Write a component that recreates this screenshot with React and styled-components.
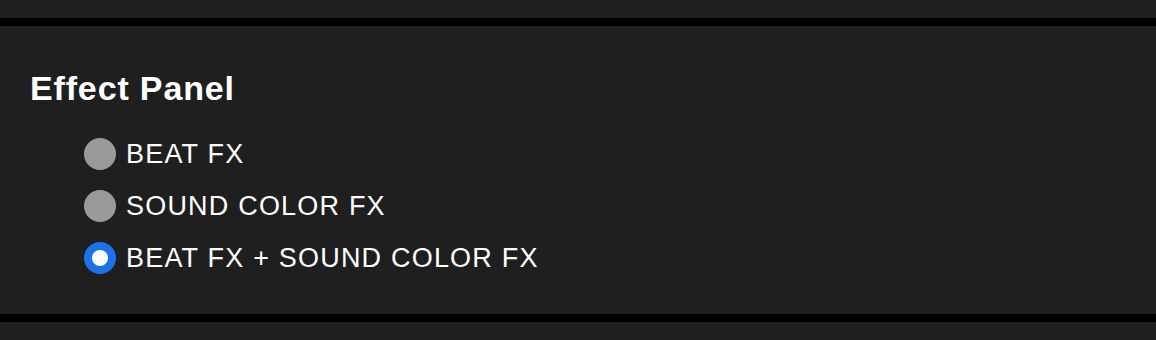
import React, { useState } from 'react';
import styled, { createGlobalStyle } from 'styled-components';

const GlobalStyle = createGlobalStyle`
  body {
    margin: 0;
    background: #1f1f1f;
    font-family: "Liberation Sans", Arial, sans-serif;
    color: #ffffff;
  }
`;

const Page = styled.div`
  display: flex;
  flex-direction: column;
  height: 340px;
  overflow: hidden;
`;

const Divider = styled.div`
  height: 8px;
  background: #000000;
  flex: none;
`;

const Spacer = styled.div`
  height: ${(props) => props.size}px;
  flex: none;
`;

const Panel = styled.section`
  padding: 42px 30px 30px;
  height: 288px;
  box-sizing: border-box;
  display: flex;
  flex-direction: column;
  gap: 20px;
`;

const Title = styled.h2`
  margin: 0;
  font-size: 34px;
  line-height: 40px;
  font-weight: bold;
  letter-spacing: 0.85px;
`;

const Options = styled.div`
  display: flex;
  flex-direction: column;
  padding-left: 54px;
`;

const Option = styled.label`
  display: flex;
  align-items: center;
  gap: 10px;
  height: 52px;
  font-size: 27px;
  line-height: 52px;
  letter-spacing: 1.2px;
  cursor: pointer;
`;

const Radio = styled.span`
  flex: none;
  width: 32px;
  height: 32px;
  border-radius: 50%;
  box-sizing: border-box;
  background: ${(props) => (props.checked ? '#ffffff' : '#9a9a9a')};
  border: ${(props) => (props.checked ? '8px solid #1a73e8' : 'none')};
`;

const options = ['BEAT FX', 'SOUND COLOR FX', 'BEAT FX + SOUND COLOR FX'];

export default function App() {
  const [selected, setSelected] = useState(2);
  return (
    <Page>
      <GlobalStyle />
      <Spacer size={18} />
      <Divider />
      <Panel>
        <Title>Effect Panel</Title>
        <Options>
          {options.map((label, i) => (
            <Option key={label} onClick={() => setSelected(i)}>
              <Radio checked={selected === i} />
              {label}
            </Option>
          ))}
        </Options>
      </Panel>
      <Divider />
    </Page>
  );
}
